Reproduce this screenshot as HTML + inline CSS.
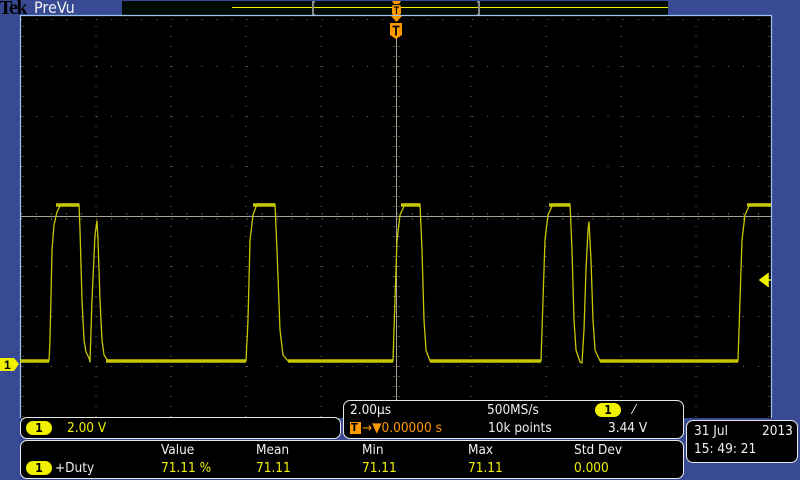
<!DOCTYPE html>
<html><head><meta charset="utf-8"><style>
*{margin:0;padding:0}
body{width:800px;height:480px;background:#384a94;position:relative;overflow:hidden;font-family:"DejaVu Sans Condensed","Liberation Sans",sans-serif;}
.box{position:absolute;background:#000;border:1.5px solid #e8e8e8;border-radius:7px;box-sizing:border-box}
.t{position:absolute;font-size:13.5px;white-space:nowrap;line-height:14px}
.w{color:#f0f0f0}.y{color:#f0f000}.o{color:#ff9900}
.pill{position:absolute;background:#f0f000;color:#000;border-radius:8px;width:26px;height:14px;font-size:12px;line-height:14px;text-align:center;font-weight:bold}
</style></head><body>
<div style="position:absolute;left:-1px;top:-1px;font-family:'Liberation Serif',serif;font-weight:bold;font-size:20px;color:#000;letter-spacing:-1.5px;line-height:18px">Tek</div>
<div class="t w" style="left:34px;top:0px;font-size:16px;line-height:16px">PreVu</div>
<svg width="800" height="480" style="position:absolute;left:0;top:0">
<rect x="122" y="1" width="546" height="14" fill="#000c04"/>
<line x1="232" y1="7.5" x2="668" y2="7.5" stroke="#f0f000" stroke-width="1"/>
<path d="M315 2h-2v13h2" stroke="#888" stroke-width="2" fill="none"/>
<path d="M477 2h2v13h-2" stroke="#888" stroke-width="2" fill="none"/>
<rect x="20" y="16" width="752" height="402" fill="#000"/>
<line x1="20" y1="15.5" x2="772" y2="15.5" stroke="#9cc4f0" stroke-width="1.2"/>
<line x1="20.5" y1="16" x2="20.5" y2="418" stroke="#9cc4f0" stroke-width="1.2"/>
<line x1="771.5" y1="16" x2="771.5" y2="418" stroke="#9cc4f0" stroke-width="1.2"/>
<g stroke="#7a7462" stroke-width="1">
<g stroke-dasharray="1 14.04">
<line x1="21" y1="66.5" x2="771" y2="66.5"/><line x1="21" y1="116.5" x2="771" y2="116.5"/><line x1="21" y1="166.5" x2="771" y2="166.5"/>
<line x1="21" y1="266.5" x2="771" y2="266.5"/><line x1="21" y1="316.5" x2="771" y2="316.5"/><line x1="21" y1="366.5" x2="771" y2="366.5"/>
<line x1="21" y1="19.5" x2="771" y2="19.5"/>
</g>
<g stroke-dasharray="1 9">
<line x1="96" y1="26" x2="96" y2="418"/><line x1="171" y1="26" x2="171" y2="418"/><line x1="246" y1="26" x2="246" y2="418"/><line x1="321" y1="26" x2="321" y2="418"/>
<line x1="471" y1="26" x2="471" y2="418"/><line x1="546" y1="26" x2="546" y2="418"/><line x1="621" y1="26" x2="621" y2="418"/><line x1="696" y1="26" x2="696" y2="418"/>
<line x1="23" y1="26" x2="23" y2="418"/><line x1="769" y1="26" x2="769" y2="418"/>
</g>
</g>
<line x1="21" y1="216.5" x2="771" y2="216.5" stroke="#a8a090" stroke-width="1"/>
<line x1="396.5" y1="38" x2="396.5" y2="418" stroke="#a8a090" stroke-width="1"/>
<g stroke="#a8a090" stroke-width="1" stroke-dasharray="1 14.04"><line x1="21" y1="214" x2="771" y2="214"/><line x1="21" y1="219" x2="771" y2="219"/></g>
<g stroke="#a8a090" stroke-width="1" stroke-dasharray="1 9"><line x1="394" y1="26" x2="394" y2="418"/><line x1="399" y1="26" x2="399" y2="418"/></g>
<g fill="none" stroke-linejoin="round">
<path stroke="#e8e800" stroke-width="3.5" opacity="0.85" d="M20 361H49M106 361H246M288 361H393M430 361H541M600 361H738M56 205H79M253 205H275M401 205H420M549 205H570M747 205H771"/>
<path stroke="#c8c800" stroke-width="1.3" d="M20 361L49 361L50 340L52 250L54 225L57 212L61 204L79 204L80 230L82 300L84 340L86 352L89 358L90 362L92 300L95 235L97 221L98 240L100 300L102 340L104 355L108 361L246 361L248 320L250 240L253 215L257 204L275 204L277 250L280 330L283 355L288 361L393 361L395 300L397 240L400 215L405 204L420 204L422 250L424 320L426 350L430 361L541 361L543 300L545 240L548 215L553 204L570 204L572 250L574 320L576 350L580 362L582 363L584 330L586 270L588 230L589 222L591 260L593 320L595 350L600 361L738 361L740 300L742 240L745 215L750 204L771 204"/>
</g>
<path d="M760 280L768 274V286Z M766 280H771" stroke="#f0f000" fill="#f0f000" stroke-width="1.5"/>
<path d="M0 358H14L19 364L14 371H0Z" fill="#f0f000"/>
<text x="4" y="369" font-size="12" font-weight="bold" fill="#000" font-family="Liberation Sans">1</text>
<path d="M392 1h9l-2 3h-5z" fill="#ff9900"/><rect x="392" y="5" width="9" height="10" rx="2" fill="#ff9900"/>
<path d="M394 7h5M396.5 7v7" stroke="#000" stroke-width="1.3"/>
<path d="M391 16h11l-5.5 6z" fill="#ff9900"/>
<path d="M390 23h12v12l-6 4l-6-4z" fill="#ff9900"/>
<path d="M392.5 26.5h7M396 26.5v9" stroke="#000" stroke-width="1.8"/>
</svg>
<div class="box" style="left:20px;top:417px;width:321px;height:22px"></div>
<div class="pill" style="left:26px;top:421px">1</div>
<div class="t y" style="left:67px;top:421px">2.00 V</div>
<div class="box" style="left:343px;top:400px;width:341px;height:39px"></div>
<div class="t w" style="left:350px;top:403px">2.00µs</div>
<div class="t w" style="left:487px;top:403px">500MS/s</div>
<div class="pill" style="left:595px;top:403px">1</div>
<div class="t w" style="left:633px;top:403px">⁄</div>
<div style="position:absolute;left:350px;top:422px;width:11px;height:12px;background:#ff9900"></div>
<div class="t" style="left:351px;top:421px;color:#000;font-size:11px;font-weight:bold">T</div>
<div class="t o" style="left:362px;top:421px">→▼0.00000 s</div>
<div class="t w" style="left:488px;top:421px">10k points</div>
<div class="t w" style="left:608px;top:421px">3.44 V</div>
<div class="box" style="left:20px;top:440px;width:664px;height:39px"></div>
<div class="t w" style="left:161px;top:443px">Value</div>
<div class="t w" style="left:256px;top:443px">Mean</div>
<div class="t w" style="left:362px;top:443px">Min</div>
<div class="t w" style="left:468px;top:443px">Max</div>
<div class="t w" style="left:574px;top:443px">Std Dev</div>
<div class="pill" style="left:26px;top:461px">1</div>
<div class="t w" style="left:55px;top:461px">+Duty</div>
<div class="t y" style="left:161px;top:461px">71.11 %</div>
<div class="t y" style="left:256px;top:461px">71.11</div>
<div class="t y" style="left:362px;top:461px">71.11</div>
<div class="t y" style="left:468px;top:461px">71.11</div>
<div class="t y" style="left:574px;top:461px">0.000</div>
<div class="box" style="left:686px;top:420px;width:112px;height:43px"></div>
<div class="t w" style="left:694px;top:424px">31 Jul</div>
<div class="t w" style="left:762px;top:424px">2013</div>
<div class="t w" style="left:694px;top:442px">15: 49: 21</div>
</body></html>
